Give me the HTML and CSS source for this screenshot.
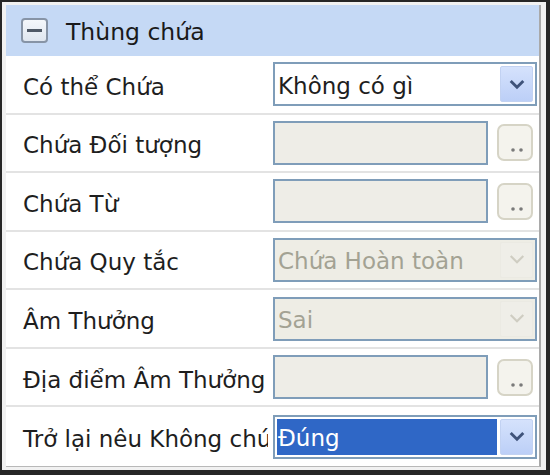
FILE: index.html
```html
<!DOCTYPE html>
<html lang="vi">
<head>
<meta charset="utf-8">
<link rel="stylesheet" href="styles.css">
</head>
<body>
<div class="frame">
  <div class="grid">
    <div class="header">
      <span class="toggle"><span class="bar"></span></span>
      <span class="title">Thùng chứa</span>
    </div>
    <div class="rows">
      <div class="row">
        <div class="label">Có thể Chứa</div>
        <div class="value">
          <div class="combo">
            <span class="combo-text">Không có gì</span>
            <span class="arrow"><svg viewBox="0 0 20 12" width="18" height="11"><polyline points="3,2 10,9 17,2" fill="none" stroke="#3f537a" stroke-width="3.2" stroke-linejoin="miter"/></svg></span>
          </div>
        </div>
      </div>
      <div class="row">
        <div class="label">Chứa Đối tượng</div>
        <div class="value">
          <div class="textbox"></div>
          <span class="dots"><svg viewBox="0 0 20 6" width="20" height="6"><circle cx="6" cy="3" r="1.8" fill="#7a7a7a"/><circle cx="14" cy="3" r="1.8" fill="#7a7a7a"/></svg></span>
        </div>
      </div>
      <div class="row">
        <div class="label">Chứa Từ</div>
        <div class="value">
          <div class="textbox"></div>
          <span class="dots"><svg viewBox="0 0 20 6" width="20" height="6"><circle cx="6" cy="3" r="1.8" fill="#7a7a7a"/><circle cx="14" cy="3" r="1.8" fill="#7a7a7a"/></svg></span>
        </div>
      </div>
      <div class="row">
        <div class="label">Chứa Quy tắc</div>
        <div class="value">
          <div class="combo disabled">
            <span class="combo-text">Chứa Hoàn toàn</span>
            <span class="arrow"><svg viewBox="0 0 20 12" width="18" height="11"><polyline points="3,2 10,9 17,2" fill="none" stroke="#cfcdc2" stroke-width="2.4"/></svg></span>
          </div>
        </div>
      </div>
      <div class="row">
        <div class="label">Âm Thưởng</div>
        <div class="value">
          <div class="combo disabled">
            <span class="combo-text">Sai</span>
            <span class="arrow"><svg viewBox="0 0 20 12" width="18" height="11"><polyline points="3,2 10,9 17,2" fill="none" stroke="#cfcdc2" stroke-width="2.4"/></svg></span>
          </div>
        </div>
      </div>
      <div class="row">
        <div class="label">Địa điểm Âm Thưởng</div>
        <div class="value">
          <div class="textbox"></div>
          <span class="dots"><svg viewBox="0 0 20 6" width="20" height="6"><circle cx="6" cy="3" r="1.8" fill="#7a7a7a"/><circle cx="14" cy="3" r="1.8" fill="#7a7a7a"/></svg></span>
        </div>
      </div>
      <div class="row last">
        <div class="label">Trở lại nêu Không chứa</div>
        <div class="value">
          <div class="combo selected">
            <span class="combo-text">Đúng</span>
            <span class="arrow"><svg viewBox="0 0 20 12" width="18" height="11"><polyline points="3,2 10,9 17,2" fill="none" stroke="#3f537a" stroke-width="3.2"/></svg></span>
          </div>
        </div>
      </div>
    </div>
  </div>
</div>
</body>
</html>
```

FILE: styles.css
```css
html, body {
  margin: 0;
  padding: 0;
  background: #ffffff;
}

.frame {
  box-sizing: border-box;
  width: 550px;
  height: 475px;
  border-style: solid;
  border-color: #262626;
  border-width: 2px 4px 5px 2px;
  background: #f1f1f1;
  padding: 3px 5px 3px 4px;
  font-family: "DejaVu Sans", Verdana, sans-serif;
  font-size: 23px;
  color: #1e1e1e;
}

.grid {
  box-sizing: border-box;
  height: 100%;
  display: flex;
  flex-direction: column;
  background: #ffffff;
  border-right: 2px solid #a9a9a9;
  border-bottom: 1px solid #b8b8b8;
}

.header {
  height: 51px;
  flex: none;
  background: #c5d9f5;
  display: flex;
  align-items: center;
  padding-left: 15px;
}

.toggle {
  box-sizing: border-box;
  width: 27px;
  height: 25px;
  border: 2px solid #8794a6;
  border-radius: 4px;
  background: linear-gradient(#f4f7fb, #dfe6ef);
  display: flex;
  align-items: center;
  justify-content: center;
  margin-right: 18px;
}

.toggle .bar {
  width: 15px;
  height: 3px;
  background: #4f5966;
}

.title {
  font-size: 23.5px;
  color: #1a1a1a;
  padding-top: 3px;
}

.rows {
  flex: 1;
  display: grid;
  grid-template-rows: repeat(7, 1fr);
}

.row {
  box-sizing: border-box;
  display: grid;
  grid-template-columns: 262px 1fr;
  align-items: center;
  border-bottom: 2px solid #e3e3e3;
}

.row.last {
  border-bottom: none;
}

.label {
  padding-left: 17px;
  padding-top: 5px;
  white-space: nowrap;
  overflow: hidden;
}

.value {
  display: flex;
  align-items: center;
  padding-left: 5px;
  padding-right: 2px;
}

.combo {
  box-sizing: border-box;
  flex: 1;
  height: 44px;
  border: 2px solid #7f9db9;
  background: #ffffff;
  display: flex;
  align-items: center;
  padding: 2px;
}

.combo-text {
  flex: 1;
  padding-left: 1px;
  padding-top: 3px;
  align-self: stretch;
  display: flex;
  align-items: center;
  white-space: nowrap;
  overflow: hidden;
}

.combo .arrow {
  box-sizing: border-box;
  width: 33px;
  height: 36px;
  margin-left: 3px;
  border-radius: 2px;
  background: linear-gradient(#d5e2fc, #bccff7);
  border: 1px solid #c2d2f2;
  display: flex;
  align-items: center;
  justify-content: center;
}

.combo.disabled {
  background: #eeede5;
  color: #a3a293;
}

.combo.disabled .arrow {
  background: #efeee8;
  border-color: #ebeae3;
}

.combo.selected .combo-text {
  background: #2f67c6;
  color: #ffffff;
}

.textbox {
  box-sizing: border-box;
  width: 215px;
  height: 44px;
  border: 2px solid #7f9db9;
  background: #eeede7;
}

.dots {
  box-sizing: border-box;
  width: 36px;
  height: 37px;
  margin-left: 9px;
  border: 2px solid #d6d4c6;
  border-radius: 7px;
  background: #f4f3ed;
  display: flex;
  align-items: flex-end;
  justify-content: center;
  padding-bottom: 6px;
  padding-left: 3px;
}
```
